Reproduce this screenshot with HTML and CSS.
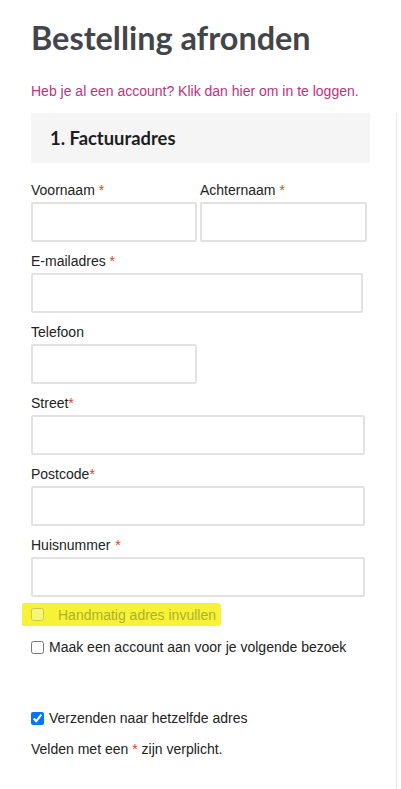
FILE: index.html
```html
<!DOCTYPE html>
<html lang="nl">
<head>
<meta charset="utf-8">
<title>Bestelling afronden</title>
<link rel="stylesheet" href="styles.css">
</head>
<body>
<div class="page">
  <h1 class="title">Bestelling afronden</h1>
  <p class="login"><a class="login-link" href="#">Heb je al een account? Klik dan hier om in te loggen.</a></p>
  <div class="layout">
    <form class="checkout">
      <h3 class="section">1. Factuuradres</h3>
      <div class="row-2 first">
        <div class="field">
          <label class="label">Voornaam <span class="req">*</span></label>
          <input class="input w-half" type="text">
        </div>
        <div class="field">
          <label class="label">Achternaam <span class="req">*</span></label>
          <input class="input w-half2" type="text">
        </div>
      </div>
      <div class="field">
        <label class="label">E-mailadres <span class="req">*</span></label>
        <input class="input w-email" type="text">
      </div>
      <div class="field">
        <label class="label">Telefoon</label>
        <input class="input w-half" type="text">
      </div>
      <div class="field">
        <label class="label">Street<span class="req">*</span></label>
        <input class="input w-full" type="text">
      </div>
      <div class="field">
        <label class="label">Postcode<span class="req">*</span></label>
        <input class="input w-full" type="text">
      </div>
      <div class="field">
        <label class="label">Huisnummer <span class="req req-wide">*</span></label>
        <input class="input w-full" type="text">
      </div>
      <div class="check-row manual">
        <span class="highlight">
          <span class="dim">
            <input class="box" type="checkbox">
            <span class="manual-text">Handmatig adres invullen</span>
          </span>
        </span>
      </div>
      <label class="check-row account">
        <input class="box" type="checkbox">
        <span>Maak een account aan voor je volgende bezoek</span>
      </label>
      <label class="check-row ship">
        <input class="box" type="checkbox" checked>
        <span>Verzenden naar hetzelfde adres</span>
      </label>
      <p class="note">Velden met een <span class="req">*</span> zijn verplicht.</p>
    </form>
    <aside class="sidebar"></aside>
  </div>
</div>
</body>
</html>
```

FILE: styles.css
```css
html, body {
  margin: 0;
  padding: 0;
  background: #ffffff;
}

body {
  font-family: Arial, "Liberation Sans", sans-serif;
  font-size: 14px;
  color: #222222;
  overflow: hidden;
}

.page {
  padding-left: 31px;
}

.title {
  margin: 18px 0 0 0;
  font-family: Lato, "Open Sans", sans-serif;
  font-weight: 700;
  font-size: 32.4px;
  line-height: 40px;
  color: #43454b;
  letter-spacing: 0;
}

.login {
  margin: 23px 0 0 0;
  line-height: 20px;
}

.login-link {
  color: #c0307d;
  text-decoration: none;
}

.layout {
  display: flex;
  margin-top: 12px;
}

.checkout {
  width: 339px;
  padding-bottom: 60px;
}

.sidebar {
  flex: 1;
  margin-left: 26px;
  border-left: 1px solid #e8e8e8;
}

.section {
  margin: 0;
  height: 50px;
  padding: 0 19px;
  background: #f5f5f5;
  font-family: Lato, "Open Sans", sans-serif;
  font-weight: 700;
  font-size: 18.4px;
  line-height: 50px;
  color: #1d1d1f;
}

.row-2 {
  display: flex;
  gap: 3px;
}

.row-2.first {
  margin-top: 17px;
}

.row-2.first .field {
  margin-top: 0;
}

.field {
  margin-top: 9px;
}

.label {
  display: block;
  line-height: 20px;
  margin-bottom: 2px;
  color: #222222;
}

.req {
  color: #e2401c;
}

.req-wide {
  margin-left: 1px;
}

.input {
  display: block;
  box-sizing: border-box;
  height: 40px;
  margin: 0;
  border: 2px solid #e2e2e2;
  border-radius: 2px;
  background: #ffffff;
  padding: 0 8px;
  font: inherit;
}

.w-half { width: 166px; }
.w-half2 { width: 167px; }
.w-email { width: 332px; }
.w-full { width: 334px; }

.check-row {
  display: flex;
  align-items: center;
  line-height: 20px;
  color: #222222;
}

.box {
  width: 13px;
  height: 13px;
  margin: 0;
  flex: none;
}

.manual {
  margin-top: 6px;
  margin-left: -9px;
}

.highlight {
  display: inline-flex;
  align-items: center;
  height: 23px;
  padding: 0 5px 0 9px;
  background: #f6f236;
  border-radius: 2px 4px 3px 1px;
}

.dim {
  display: inline-flex;
  align-items: center;
  gap: 14px;
  opacity: 0.33;
}

.manual-text {
  color: #222222;
}

.account {
  margin-top: 11px;
  gap: 5px;
}

.ship {
  margin-top: 51px;
  gap: 5px;
}

.note {
  margin: 11px 0 0 0;
  line-height: 20px;
}
```
